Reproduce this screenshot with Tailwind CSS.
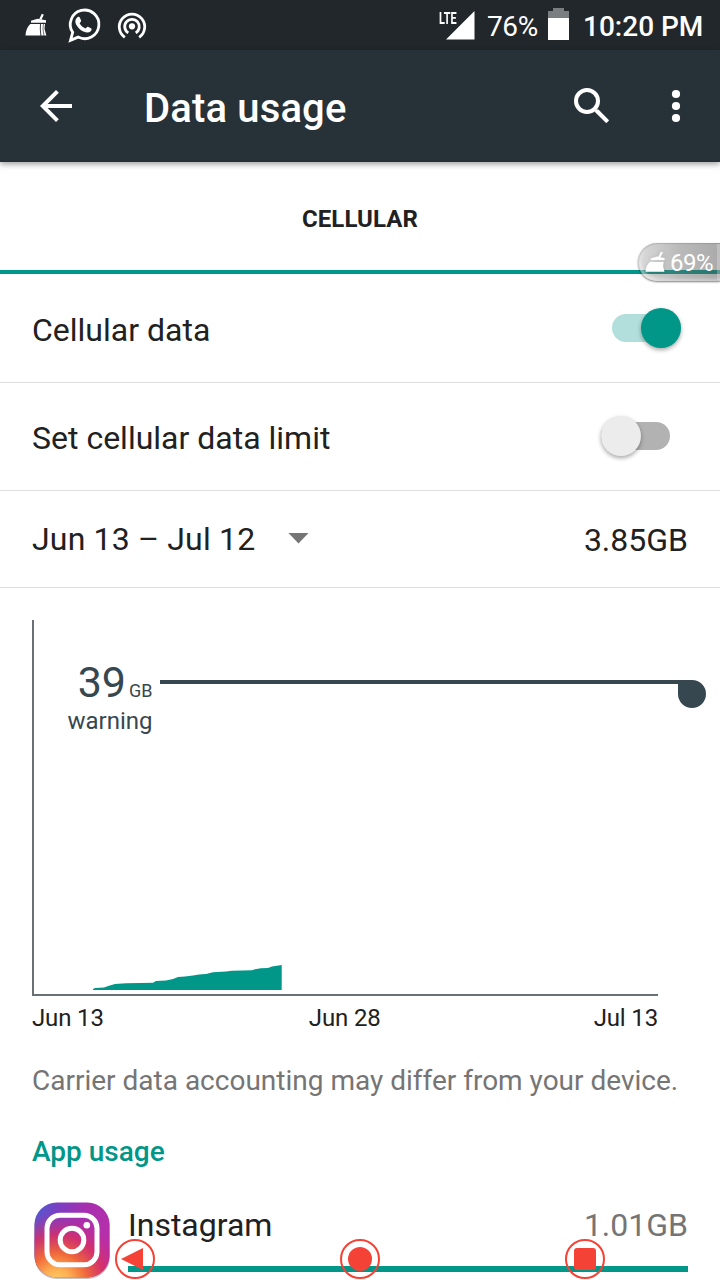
<!DOCTYPE html>
<html lang="en">
<head>
<meta charset="utf-8">
<title>Data usage</title>
<script src="https://cdn.jsdelivr.net/npm/@tailwindcss/browser@4"></script>
</head>
<body class="bg-white">
<div class="relative flex h-[1280px] w-[720px] flex-col overflow-hidden bg-white font-[Roboto,sans-serif] text-[#212121]">

  <!-- Status bar -->
  <div class="flex h-[50px] shrink-0 items-start bg-[#22272b] text-white">
    <svg class="h-[50px] w-[160px] shrink-0" viewBox="0 0 160 50" fill="none">
      <path d="M42.800 14.200L40.300 19.500" stroke="#fff" stroke-width="2.200"/>
      <path d="M31 20.700L37.500 18.700L46 20.200V22.800H31z" fill="#fff"/>
      <path d="M30.300 24H45l-.5 5 1.900 6.600H25.500c.3-5 1.800-8.800 4.800-11.600z" fill="#fff"/>
      <path d="M40.500 24l-.2 5 .6 7" stroke="#22272b" stroke-width=".9"/>
      <path d="M43.500 24l-.5 5 1 7" stroke="#22272b" stroke-width=".6"/>
      <path d="M70.500 40.300l2.200-8A14.300 14.300 0 1 1 78.100 37.100z" stroke="#fff" stroke-width="2.800"/>
      <path d="M77.400 17.200c1.200-.8 2.100-.5 2.500.5l1.200 2.900c.3 1-.9 2-1.500 2.700 1.400 2.500 3.300 4.200 6 5.300.8-.9 1.500-2.200 2.400-1.800l3.300 1.600c.7.5 0 2.300-.9 3.200-1.800 1.500-4.400 1-7-.1-3.500-1.600-5.700-4.200-7.300-7.100-1.400-2.600-.9-5.400 1.300-7.200z" fill="#fff"/>
      <circle cx="132" cy="26.300" r="3.100" fill="#fff"/>
      <path d="M128.300 32.900a7.300 7.300 0 1 1 7.400 0M124.800 37.300a12.700 12.700 0 1 1 14.400 0" stroke="#fff" stroke-width="2.800"/>
    </svg>
    <div class="ml-[279px] h-[50px] w-[19px] shrink-0 pt-[9px]">
      <span class="block origin-left scale-x-[0.64] text-[17px] leading-[18px] font-bold">LTE</span>
    </div>
    <svg class="-ml-[13px] h-[50px] w-[32px] shrink-0" viewBox="0 0 32 50"><path d="M1 39.500L29.500 11v28.500z" fill="#fff"/></svg>
    <span class="ml-[10px] w-[60px] shrink-0 pt-[10px] text-[28px] leading-[33px] font-normal tracking-[-0.4px]">76%</span>
    <svg class="mt-2 ml-[1px] h-[32px] w-[21px] shrink-0" viewBox="0 0 21 32"><path d="M5 0h11v3h5v7H0V3h5z" fill="#7b7e80"/><path d="M0 10h21v22H0z" fill="#fff"/></svg>
    <span class="ml-[14px] shrink-0 pt-[10px] text-[28px] leading-[33px] font-medium">10:20 PM</span>
  </div>

  <!-- App bar -->
  <div class="z-10 flex h-[112px] shrink-0 items-center bg-[#273238] text-white shadow-[0_2px_6px_rgba(0,0,0,0.4)]">
    <svg class="ml-8 size-12" viewBox="0 0 24 24"><path d="M20 11H7.830l5.590-5.590L12 4l-8 8 8 8 1.410-1.410L7.830 13H20z" fill="#fff"/></svg>
    <h1 class="ml-16 pt-[5px] text-[40px] leading-[47px] font-medium tracking-[0.15px]">Data usage</h1>
    <svg class="ml-auto h-[112px] w-[152px]" viewBox="568 50 152 112"><circle cx="587" cy="101" r="11" fill="none" stroke="#fff" stroke-width="4"/><path d="M595 109.300l2.500.8 11.500 10.500-2.500 2.500-11.300-11z" fill="#fff"/><path d="M596.500 110.500l10.800 10.800" stroke="#fff" stroke-width="4"/><g fill="#fff"><circle cx="676" cy="94" r="4.100"/><circle cx="676" cy="106" r="4.100"/><circle cx="676" cy="118" r="4.100"/></g></svg>
  </div>

  <!-- Tab -->
  <div class="flex h-[112px] shrink-0 items-center justify-center border-b-4 border-[#009688] pt-[6px] text-[24px] font-bold tracking-[0.1px]">CELLULAR</div>

  <!-- Settings rows -->
  <div class="flex h-[109px] shrink-0 items-center justify-between border-b border-[#dedede] pr-[39px] pl-8">
    <span class="pt-1 text-[32px]">Cellular data</span>
    <span class="flex h-7 w-[69px] items-center justify-end rounded-full bg-[#b2dfdb]"><span class="size-10 shrink-0 rounded-full bg-[#009688] shadow-[0_2px_4px_rgba(0,0,0,0.35)]"></span></span>
  </div>
  <div class="flex h-[108px] shrink-0 items-center justify-between border-b border-[#dedede] pr-[50px] pb-[2px] pl-8">
    <span class="pt-1 text-[32px]">Set cellular data limit</span>
    <span class="flex h-7 w-[69px] items-center rounded-full bg-[#b2b2b2]"><span class="size-10 shrink-0 rounded-full bg-[#ececec] shadow-[0_2px_4px_rgba(0,0,0,0.35)]"></span></span>
  </div>
  <div class="flex h-[97px] shrink-0 items-center border-b border-[#dedede] px-8 text-[32px]">
    <span class="tracking-[0.17px]">Jun 13 – Jul 12</span>
    <svg class="-mt-[1px] ml-[33px] h-[11px] w-[21px]" viewBox="0 0 21 11"><path d="M.5 0h20l-10 10.500z" fill="#757575"/></svg>
    <span class="ml-auto pt-[2px]">3.85GB</span>
  </div>

  <!-- Usage chart -->
  <div class="relative h-[408px] shrink-0 text-[#37474f]">
    <svg class="block size-full" viewBox="0 588 720 408">
      <path d="M33 620v375h625" fill="none" stroke="#6a7176" stroke-width="2"/>
      <path d="M93 990L93 989L95 988L104 987.500L109 985.800L115 984L126 983.300L153 982.800L156 981L166 980.600L173 979L178 977L185 976.600L193 975.500L199 974.400L206 974L213 972.300L226 971.600L232 970.700L252 970.300L255 969.200L261 968.300L268 968L272 966.500L277 965.800L281.700 965L281.700 990Z" fill="#009688"/>
      <path d="M160 680h532a14 14 0 1 1-14 14v-10H160z" fill="#37474f"/>
    </svg>
    <div class="absolute top-[68px] left-0 w-[152.500px] text-right">
      <div class="flex h-[52px] items-baseline justify-end gap-[3px] leading-[52px]"><span class="text-[43px]">39</span><span class="text-[18px]">GB</span></div>
      <div class="-mt-[1px] text-[24px] leading-[28px]">warning</div>
    </div>
  </div>
  <div class="flex h-[44px] shrink-0 items-center justify-between pr-[62px] pl-8 text-[24px] tracking-[-0.15px]">
    <span>Jun 13</span><span class="-ml-[8px]">Jun 28</span><span>Jul 13</span>
  </div>

  <p class="mt-6 shrink-0 px-8 text-[28px] leading-[33px] whitespace-nowrap text-[#757575]">Carrier data accounting may differ from your device.</p>
  <h2 class="mt-[38px] shrink-0 px-8 text-[28px] leading-[33px] font-medium text-[#009688]">App usage</h2>

  <!-- App row -->
  <div class="mt-[32px] flex shrink-0 items-start pr-8 pl-8">
    <svg class="h-[80px] w-[80px] shrink-0" viewBox="32 1200 80 80">
      <defs>
        <linearGradient id="base" x1="0" y1="0" x2="1" y2=".25"><stop stop-color="#4f5bd0"/><stop offset=".35" stop-color="#7f3cc0"/><stop offset=".65" stop-color="#a62fb0"/><stop offset="1" stop-color="#b52fac"/></linearGradient>
        <radialGradient id="warm" cx=".3" cy="1.080" r=".95"><stop stop-color="#ffd36b"/><stop offset=".2" stop-color="#fdb052"/><stop offset=".42" stop-color="#f06a3a"/><stop offset=".68" stop-color="#d83062" stop-opacity=".85"/><stop offset="1" stop-color="#c42c97" stop-opacity="0"/></radialGradient>
      </defs>
      <rect x="34.500" y="1204" width="75.500" height="75" rx="22" fill="#000" opacity=".22"/>
      <rect x="34.500" y="1202.500" width="75" height="75" rx="22" fill="url(#base)"/>
      <rect x="34.500" y="1202.500" width="75" height="75" rx="22" fill="url(#warm)"/>
      <g fill="none" stroke="#fff" stroke-width="5"><rect x="47" y="1215.300" width="50" height="49.500" rx="13"/><circle cx="72" cy="1240" r="11.800"/></g>
      <circle cx="86.800" cy="1225.300" r="3.300" fill="#fff"/>
    </svg>
    <div class="ml-4 flex-1">
      <div class="flex h-[66px] justify-between pt-[6px] text-[32px] leading-[38px]"><span>Instagram</span><span class="text-[#757575]">1.01GB</span></div>
      <div class="h-[6px] bg-[#009688]"></div>
    </div>
  </div>

  <!-- Floating cleaner badge -->
  <div class="absolute top-[243px] left-[638px] z-20 flex h-[38px] w-[82px] items-center rounded-l-full bg-linear-to-r from-[#888]/30 via-[#666]/45 to-[#555]/50 text-white shadow-[0_1px_2px_rgba(0,0,0,0.5),inset_1px_1px_1px_rgba(80,80,80,0.2),inset_3px_-2px_3px_rgba(255,255,255,0.4)]">
    <svg class="ml-[7px] h-[21px] w-[21px] shrink-0 drop-shadow-sm" viewBox="25 14 22 22" fill="#fff"><path d="M42.800 13.800L40 19.500" stroke="#fff" stroke-width="2.200"/><path d="M31 20.700L37.500 18.700L45.500 20.200V22.600H31z"/><path d="M30.300 24.200H44.500l-.5 5 1.400 5.600H25.500c.3-4.600 1.800-8 4.800-10.600z"/></svg>
    <span class="ml-[4px] pt-[2px] text-[24px] leading-[28px] tracking-[-0.5px]">69%</span>
    <span class="absolute right-0 h-[36px] w-[3px] bg-white/25"></span>
  </div>

  <!-- Floating navigation keys -->
  <svg class="absolute top-[1239px] left-[115px] z-20 h-[41px] w-[490px]" viewBox="115 1239 490 41" fill="#f44336">
    <g fill="none" stroke="#f44336" stroke-width="2"><circle cx="135" cy="1259" r="19"/><circle cx="360" cy="1259" r="19"/><circle cx="585" cy="1259" r="19"/></g>
    <path d="M121 1259l22-11v22z"/><circle cx="360" cy="1259" r="12"/><rect x="574" y="1248" width="22" height="22" rx="3"/>
  </svg>
</div>
</body>
</html>
